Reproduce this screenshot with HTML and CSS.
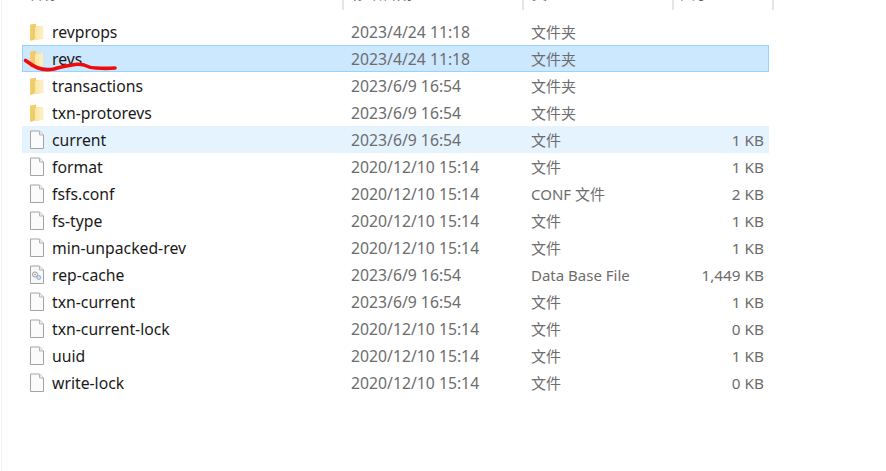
FILE: index.html
```html
<!DOCTYPE html>
<html lang="zh">
<head>
<meta charset="utf-8">
<title>revs</title>
<link rel="stylesheet" href="styles.css">
</head>
<body>
<svg class="defs" width="0" height="0" aria-hidden="true">
  <defs>
    <linearGradient id="fg" x1="0" y1="0" x2="1" y2="0">
      <stop offset="0" stop-color="#f7dc8e"/>
      <stop offset="0.45" stop-color="#fbe7a8"/>
      <stop offset="1" stop-color="#fdf0c4"/>
    </linearGradient>
    <symbol id="folder" viewBox="0 0 14 18">
      <path d="M1 2.500 L6 1.500 V4 L12.500 4 V15 L1 16.500 Z" fill="#edc45f"/>
      <path d="M1 2.500 L6 1.500 V4 L4.600 4.600 V15.400 L1 16.500 Z" fill="#f2cd6a"/>
      <path d="M4.500 4.400 L12.500 3.600 V15 L1 16.800 L4.500 14.800 Z" fill="url(#fg)"/>
      <path d="M1 16.500 L4.500 14.800 V4.400" fill="none" stroke="#e3bb5c" stroke-width="0.600"/>
    </symbol>
    <symbol id="file" viewBox="0 0 16 20">
      <path d="M1.500 1 H10.500 L14.500 5 V18.500 H1.500 Z" fill="#fbfbfb" stroke="#a3a3a3"/>
      <path d="M10.500 1 V5 H14.500" fill="#ececec" stroke="#b5b5b5"/>
    </symbol>
    <symbol id="dbfile" viewBox="0 0 16 20">
      <path d="M1.500 1 H10.500 L14.500 5 V18.500 H1.500 Z" fill="#f8f8f8" stroke="#a3a3a3"/>
      <path d="M10.500 1 V5 H14.500" fill="#ececec" stroke="#b5b5b5"/>
      <circle cx="6" cy="9.500" r="2.600" fill="#ececec" stroke="#a0a0a0" stroke-width="1"/>
      <circle cx="6" cy="9.500" r="0.800" fill="#a0a0a0"/>
      <circle cx="9.800" cy="12.500" r="2" fill="#cfe0f2" stroke="#8cb2da" stroke-width="1"/>
    </symbol>
  </defs>
</svg>
<main class="explorer">
  <header class="cols">
    <div class="col col-name"><span>名称</span></div>
    <div class="col col-date"><span>修改日期</span></div>
    <div class="col col-type"><span>类型</span></div>
    <div class="col col-size"><span>大小</span></div>
  </header>
  <section class="list">
    <div class="row"><svg class="icon"><use href="#folder"/></svg><span class="name">revprops</span><span class="date">2023/4/24 11:18</span><span class="type">文件夹</span><span class="size"></span></div>
    <div class="row selected"><svg class="icon"><use href="#folder"/></svg><span class="name">revs</span><span class="date">2023/4/24 11:18</span><span class="type">文件夹</span><span class="size"></span></div>
    <div class="row"><svg class="icon"><use href="#folder"/></svg><span class="name">transactions</span><span class="date">2023/6/9 16:54</span><span class="type">文件夹</span><span class="size"></span></div>
    <div class="row"><svg class="icon"><use href="#folder"/></svg><span class="name">txn-protorevs</span><span class="date">2023/6/9 16:54</span><span class="type">文件夹</span><span class="size"></span></div>
    <div class="row hover"><svg class="icon"><use href="#file"/></svg><span class="name">current</span><span class="date">2023/6/9 16:54</span><span class="type">文件</span><span class="size">1 KB</span></div>
    <div class="row"><svg class="icon"><use href="#file"/></svg><span class="name">format</span><span class="date">2020/12/10 15:14</span><span class="type">文件</span><span class="size">1 KB</span></div>
    <div class="row"><svg class="icon"><use href="#file"/></svg><span class="name">fsfs.conf</span><span class="date">2020/12/10 15:14</span><span class="type">CONF 文件</span><span class="size">2 KB</span></div>
    <div class="row"><svg class="icon"><use href="#file"/></svg><span class="name">fs-type</span><span class="date">2020/12/10 15:14</span><span class="type">文件</span><span class="size">1 KB</span></div>
    <div class="row"><svg class="icon"><use href="#file"/></svg><span class="name">min-unpacked-rev</span><span class="date">2020/12/10 15:14</span><span class="type">文件</span><span class="size">1 KB</span></div>
    <div class="row"><svg class="icon"><use href="#dbfile"/></svg><span class="name">rep-cache</span><span class="date">2023/6/9 16:54</span><span class="type">Data Base File</span><span class="size">1,449 KB</span></div>
    <div class="row"><svg class="icon"><use href="#file"/></svg><span class="name">txn-current</span><span class="date">2023/6/9 16:54</span><span class="type">文件</span><span class="size">1 KB</span></div>
    <div class="row"><svg class="icon"><use href="#file"/></svg><span class="name">txn-current-lock</span><span class="date">2020/12/10 15:14</span><span class="type">文件</span><span class="size">0 KB</span></div>
    <div class="row"><svg class="icon"><use href="#file"/></svg><span class="name">uuid</span><span class="date">2020/12/10 15:14</span><span class="type">文件</span><span class="size">1 KB</span></div>
    <div class="row"><svg class="icon"><use href="#file"/></svg><span class="name">write-lock</span><span class="date">2020/12/10 15:14</span><span class="type">文件</span><span class="size">0 KB</span></div>
  </section>
</main>
<svg class="scribble" width="886" height="471" aria-hidden="true">
  <path d="M25.500 60.500 C29 63 33 66 38 68 C43 70 48 70 54 69 C60 67 66 66 72 65 C76 64 80 64 84 65 C88 67 91 68 96 68 C102 68.500 109 68.500 115 68" fill="none" stroke="#f00a0a" stroke-width="3.600" stroke-linecap="round"/>
</svg>
</body>
</html>
```
FILE: styles.css
```css
html, body {
  margin: 0;
  height: 100%;
  background: #fff;
  overflow: hidden;
}
.defs {
  position: absolute;
}
.explorer {
  height: 471px;
  margin-left: 1px;
  border-left: 1px solid #f2f2f2;
  box-sizing: border-box;
  font-family: "Noto Sans", "Noto Sans CJK SC", sans-serif;
  font-size: 15px;
}
.cols {
  display: grid;
  grid-template-columns: 342px 180px 150px 100px;
  height: 10px;
  margin-bottom: 8px;
  overflow: hidden;
  color: #4c607a;
  width: 772px;
}
.col {
  border-right: 2px solid #e5e5e5;
  height: 10px;
  line-height: 20px;
  padding-left: 8px;
  box-sizing: border-box;
  overflow: hidden;
}
.col span {
  display: block;
  margin-top: -17px;
}
.col-name span {
  padding-left: 18px;
}
.col-size {
  padding-left: 6px;
}
.list {
  margin-left: 20px;
  width: 747px;
}
.row {
  display: grid;
  grid-template-columns: 30px 291px 180px 150px 96px;
  align-items: center;
  height: 27px;
  box-sizing: border-box;
  color: #6d6d6d;
}
.row.selected {
  background: #cce8ff;
  box-shadow: inset 0 0 0 1px #99d1ff;
}
.row.hover {
  background: #e5f3ff;
}
.icon {
  width: 16px;
  height: 20px;
  margin-left: 7px;
}
.name {
  color: #1a1a1a;
  font-size: 15.750px;
}
.date {
  font-size: 15.750px;
}
.date, .type {
  padding-left: 8px;
}
.size {
  text-align: right;
  padding-right: 5px;
  font-size: 15.300px;
}
.scribble {
  position: absolute;
  left: 0;
  top: 0;
  pointer-events: none;
}
```
